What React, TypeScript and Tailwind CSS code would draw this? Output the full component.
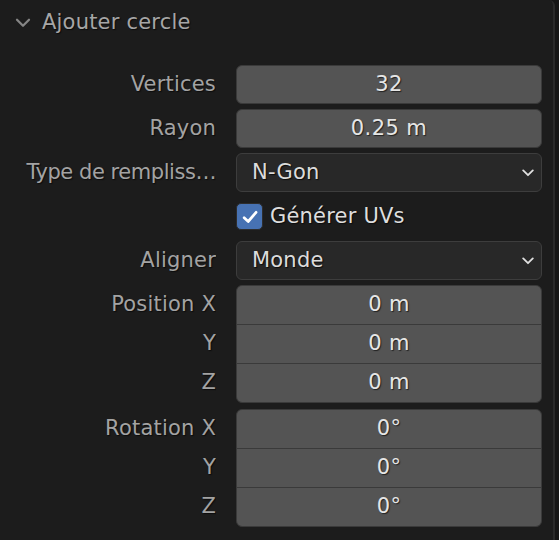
type Row =
  | { kind: 'number'; label: string; value: string }
  | { kind: 'select'; label: string; value: string; tight?: boolean }
  | { kind: 'check'; label: string; checked: boolean };

const topRows: Row[] = [
  { kind: 'number', label: 'Vertices', value: '32' },
  { kind: 'number', label: 'Rayon', value: '0.25 m' },
  { kind: 'select', label: 'Type de rempliss…', value: 'N-Gon', tight: true },
  { kind: 'check', label: 'Générer UVs', checked: true },
  { kind: 'select', label: 'Aligner', value: 'Monde' },
];

const blocks = [
  { labels: ['Position X', 'Y', 'Z'], values: ['0 m', '0 m', '0 m'] },
  { labels: ['Rotation X', 'Y', 'Z'], values: ['0°', '0°', '0°'] },
];

const font = "font-['DejaVu_Sans','Liberation_Sans',sans-serif]";

function Chevron({ className }: { className: string }) {
  return (
    <svg viewBox="0 0 12 8" className={className} fill="none">
      <path d="M1.2 1.4 6 6.2l4.8-4.8" stroke="currentColor" strokeWidth="1.8" strokeLinecap="round" strokeLinejoin="round" />
    </svg>
  );
}

function Label({ text, tight }: { text: string; tight?: boolean }) {
  return (
    <div
      className={`w-[216px] shrink-0 truncate text-right text-[21px] text-[#a3a3a3] [text-shadow:1px_1px_1px_#0c0c0c] ${
        tight ? 'tracking-[-0.45px]' : 'tracking-[0.2px]'
      }`}
    >
      {text}
    </div>
  );
}

function FieldRow({ row }: { row: Row }) {
  if (row.kind === 'check') {
    return (
      <div className="flex h-[39px] items-center">
        <div className="w-[236px] shrink-0" />
        <div className="flex size-[27px] items-center justify-center rounded-[5px] border border-[#2d2d2d] bg-[#4772b3]">
          <svg viewBox="0 0 16 16" className="size-[18px]" fill="none">
            <path d="M2.8 8.6 6.4 12 13.4 3.8" stroke="#ffffff" strokeWidth="2.4" strokeLinecap="round" strokeLinejoin="round" />
          </svg>
        </div>
        <span className="ml-[7px] text-[21px] tracking-[0.2px] text-[#dedede] [text-shadow:1px_1px_1px_#0c0c0c]">{row.label}</span>
      </div>
    );
  }
  return (
    <div className="flex h-[39px] items-center">
      <Label text={row.label} tight={row.kind === 'select' && row.tight} />
      <div className="ml-[20px] h-full w-[306px]">
        {row.kind === 'number' ? (
          <div className="flex h-full items-center justify-center rounded-[6px] border border-[#3a3a3a] bg-[#545454] text-[21px] tracking-[0.4px] text-[#e6e6e6] [text-shadow:1px_1px_1px_#222]">
            {row.value}
          </div>
        ) : (
          <div className="flex h-full items-center justify-between rounded-[6px] border border-[#3d3d3d] bg-[#282828] pl-[15px] pr-[7px] text-[21px] tracking-[0.2px] text-[#dcdcdc] [text-shadow:1px_1px_1px_#0c0c0c]">
            <span>{row.value}</span>
            <Chevron className="h-[8px] w-[12px] text-[#e0e0e0]" />
          </div>
        )}
      </div>
    </div>
  );
}

function Block({ labels, values }: { labels: string[]; values: string[] }) {
  return (
    <div className="flex">
      <div className="flex w-[216px] shrink-0 flex-col pt-px">
        {labels.map((l, i) => (
          <div key={i} className={`flex h-[38px] items-center justify-end ${i > 0 ? 'mt-px' : ''}`}>
            <Label text={l} />
          </div>
        ))}
      </div>
      <div className="ml-[20px] flex w-[306px] flex-col overflow-hidden rounded-[6px] border border-[#3a3a3a] bg-[#3a3a3a]">
        {values.map((v, i) => (
          <div
            key={i}
            className={`flex h-[38px] items-center justify-center bg-[#545454] text-[21px] tracking-[0.4px] text-[#e6e6e6] [text-shadow:1px_1px_1px_#222] ${i > 0 ? 'mt-px' : ''}`}
          >
            {v}
          </div>
        ))}
      </div>
    </div>
  );
}

export default function App() {
  return (
    <div className={`flex h-[540px] w-[559px] bg-[#161616] ${font}`}>
      <div className="flex h-full w-[555px] flex-col rounded-tr-[6px] border-r-2 border-[#2a2a2a] bg-[#1c1c1c]">
        <div className="flex h-[46px] items-center pl-[14px]">
          <Chevron className="h-[10px] w-[18px] text-[#858585]" />
          <span className="ml-[10px] text-[21px] tracking-[0.2px] text-[#a6a6a6] [text-shadow:1px_1px_1px_#0c0c0c]">Ajouter cercle</span>
        </div>
        <div className="mt-[19px] flex flex-col gap-[5px]">
          {topRows.map((r, i) => (
            <FieldRow key={i} row={r} />
          ))}
          <div className="flex flex-col gap-[6px]">
            {blocks.map((b, i) => (
              <Block key={i} labels={b.labels} values={b.values} />
            ))}
          </div>
        </div>
      </div>
    </div>
  );
}
